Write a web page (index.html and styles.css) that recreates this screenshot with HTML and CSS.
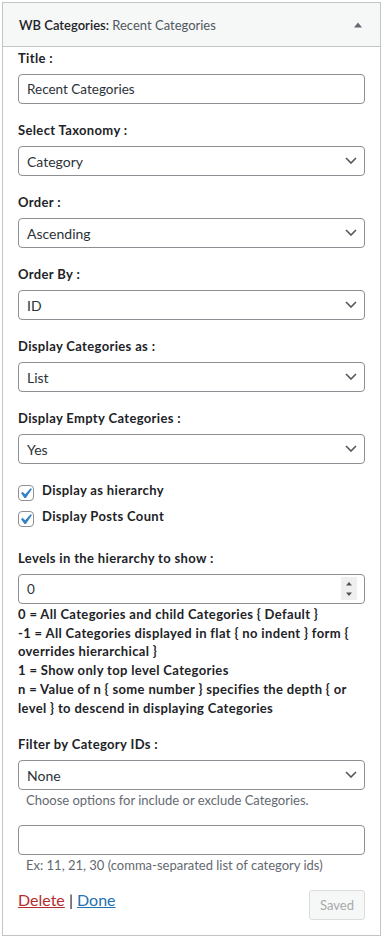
FILE: index.html
```html
<!DOCTYPE html>
<html lang="en">
<head>
	<meta charset="UTF-8">
	<title>WB Categories</title>
	<link rel="stylesheet" href="styles.css">
</head>
<body>
	<div class="widget">
		<div class="widget-top">
			<h3 class="widget-title">WB Categories: <span class="in-title">Recent Categories</span></h3>
			<svg class="toggle" width="8" height="6" viewBox="0 0 8 6"><polygon points="0,5.5 4,0.5 8,5.5"/></svg>
		</div>
		<div class="widget-inside">
			<div class="field">
				<label for="title">Title :</label>
				<input class="text" id="title" type="text" value="Recent Categories">
			</div>
			<div class="field">
				<label for="taxonomy">Select Taxonomy :</label>
				<div class="select-wrap">
					<select id="taxonomy"><option>Category</option></select>
					<svg class="chevron" width="12" height="7" viewBox="0 0 12 7"><polyline points="1,1 6,6 11,1"/></svg>
				</div>
			</div>
			<div class="field">
				<label for="order">Order :</label>
				<div class="select-wrap">
					<select id="order"><option>Ascending</option></select>
					<svg class="chevron" width="12" height="7" viewBox="0 0 12 7"><polyline points="1,1 6,6 11,1"/></svg>
				</div>
			</div>
			<div class="field">
				<label for="orderby">Order By :</label>
				<div class="select-wrap">
					<select id="orderby"><option>ID</option></select>
					<svg class="chevron" width="12" height="7" viewBox="0 0 12 7"><polyline points="1,1 6,6 11,1"/></svg>
				</div>
			</div>
			<div class="field">
				<label for="display">Display Categories as :</label>
				<div class="select-wrap">
					<select id="display"><option>List</option></select>
					<svg class="chevron" width="12" height="7" viewBox="0 0 12 7"><polyline points="1,1 6,6 11,1"/></svg>
				</div>
			</div>
			<div class="field">
				<label for="empty">Display Empty Categories :</label>
				<div class="select-wrap">
					<select id="empty"><option>Yes</option></select>
					<svg class="chevron" width="12" height="7" viewBox="0 0 12 7"><polyline points="1,1 6,6 11,1"/></svg>
				</div>
			</div>

			<div class="checks">
				<label class="check">
					<span class="cb"><input type="checkbox" checked><svg width="21" height="21" viewBox="0 0 20 20"><path d="M14.83 4.89l1.34.94-5.81 8.38H9.02L5.78 9.67l1.34-1.25 2.57 2.4z"/></svg></span>
					Display as hierarchy
				</label>
				<label class="check">
					<span class="cb"><input type="checkbox" checked><svg width="21" height="21" viewBox="0 0 20 20"><path d="M14.83 4.89l1.34.94-5.81 8.38H9.02L5.78 9.67l1.34-1.25 2.57 2.4z"/></svg></span>
					Display Posts Count
				</label>
			</div>

			<div class="field field-levels">
				<label for="levels">Levels in the hierarchy to show :</label>
				<div class="number-wrap">
					<input class="text" id="levels" type="number" value="0">
					<svg class="spin" width="16" height="23" viewBox="0 0 16 23"><rect width="16" height="23"/><polygon points="5,8.5 8,5 11,8.5"/><polygon points="5,15.5 11,15.5 8,19"/></svg>
				</div>
			</div>
			<p class="levels-note">
				0 = All Categories and child Categories { Default }<br>
				-1 = All Categories displayed in flat { no indent } form { overrides hierarchical }<br>
				1 = Show only top level Categories<br>
				n = Value of n { some number } specifies the depth { or level } to descend in displaying Categories
			</p>

			<div class="field field-tight">
				<label for="filter">Filter by Category IDs :</label>
				<div class="select-wrap">
					<select id="filter"><option>None</option></select>
					<svg class="chevron" width="12" height="7" viewBox="0 0 12 7"><polyline points="1,1 6,6 11,1"/></svg>
				</div>
				<span class="description">Choose options for include or exclude Categories.</span>
			</div>
			<div class="field field-tight">
				<input class="text" type="text" value="">
				<span class="description">Ex: 11, 21, 30 (comma-separated list of category ids)</span>
			</div>

			<div class="widget-control">
				<div class="actions"><a href="#" class="delete">Delete</a> | <a href="#" class="done">Done</a></div>
				<button type="button" class="button" disabled>Saved</button>
			</div>
		</div>
	</div>
</body>
</html>
```

FILE: styles.css
```css
*{margin:0;padding:0;box-sizing:border-box;}
body{
	background:#fff;
	font-family:Lato,"Noto Sans",sans-serif;
	font-size:13px;
	color:#1d2327;
}
.widget{
	width:379px;
	margin:2px 0 0 2px;
	border:1px solid #c3c4c7;
	background:#fff;
}
.widget-top{
	height:44px;
	background:#f6f7f7;
	border-bottom:1px solid #c3c4c7;
	display:flex;
	align-items:center;
	justify-content:space-between;
	padding:0 18px 0 16px;
}
.widget-title{
	font-size:13px;
	font-weight:600;
	color:#1d2327;
}
.in-title{
	font-weight:400;
	color:#50575e;
}
.toggle{fill:#646970;}

.widget-inside{
	padding:2px 15px 15px;
}
.field{margin-bottom:17px;}
.field label{
	display:block;
	font-weight:700;
	letter-spacing:0.35px;
	line-height:18px;
	margin-bottom:7px;
}
.text,select{
	display:block;
	width:100%;
	height:30px;
	border:1px solid #8c8f94;
	border-radius:4px;
	background:#fff;
	padding:0 8px;
	font-family:inherit;
	font-size:14px;
	color:#2c3338;
	outline:none;
}
.text{font-size:13.5px;}
select{
	-webkit-appearance:none;
	appearance:none;
	padding-right:24px;
}
.select-wrap,.number-wrap{position:relative;}
.chevron{
	position:absolute;
	right:8px;
	top:11px;
	fill:none;
	stroke:#50575e;
	stroke-width:1.6;
	pointer-events:none;
}
input[type=number]{-moz-appearance:textfield;}
input[type=number]::-webkit-inner-spin-button,
input[type=number]::-webkit-outer-spin-button{
	-webkit-appearance:none;
	margin:0;
}
.spin{
	position:absolute;
	right:8px;
	top:3px;
}
.spin rect{fill:#efefef;}
.spin polygon{fill:#505050;}

.checks{
	display:flex;
	flex-direction:column;
	gap:6px;
	margin-bottom:22px;
}
.check{
	display:flex;
	align-items:flex-start;
	gap:8px;
	font-weight:700;
	letter-spacing:0.35px;
	line-height:18px;
}
.cb{
	position:relative;
	width:16px;
	height:16px;
	margin-top:4px;
	flex:none;
}
.cb input{
	-webkit-appearance:none;
	appearance:none;
	display:block;
	width:16px;
	height:16px;
	border:1px solid #8c8f94;
	border-radius:4px;
	background:#fff;
}
.cb svg{
	position:absolute;
	left:-3px;
	top:-2px;
	fill:#3582c4;
}

.field-levels{margin-bottom:0;}
.levels-note{
	margin-top:1px;
	margin-bottom:18px;
	font-weight:700;
	letter-spacing:0.35px;
	line-height:18.7px;
}
.field-tight{margin-bottom:16px;}
.description{
	display:block;
	margin-top:1px;
	padding-left:8px;
	line-height:18px;
	color:#646970;
}

.widget-control{
	display:flex;
	justify-content:space-between;
	align-items:flex-start;
	margin-top:1px;
}
.actions{
	font-size:16px;
	color:#1d2327;
}
.delete{color:#b32d2e;}
.done{color:#2271b1;}
.button{
	height:30px;
	padding:0 10px;
	border:1px solid #dcdcde;
	border-radius:3px;
	background:#f6f7f7;
	color:#a7aaad;
	font-family:inherit;
	font-size:13px;
}
```
